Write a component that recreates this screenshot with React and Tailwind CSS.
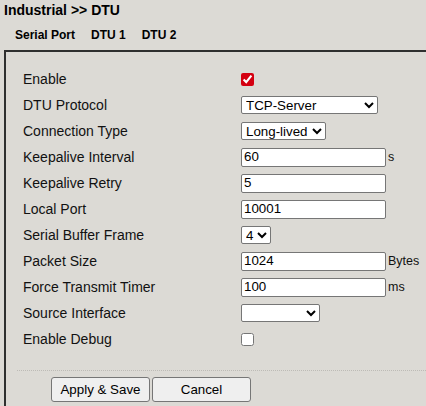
import { useState } from "react";

const font = { fontFamily: '"Liberation Sans", Arial, sans-serif' };

function Row({ label, children }) {
  return (
    <div className="flex h-[26px] items-center">
      <div className="w-[218px] text-[14px] text-[#111]">{label}</div>
      <div className="flex items-center">{children}</div>
    </div>
  );
}

const inputCls =
  "h-[19px] w-[145px] rounded-[2px] border border-[#767676] bg-white px-[2px] text-[13.33px] text-black outline-none";
const selectCls =
  "h-[18px] rounded-[2px] border border-[#767676] bg-white text-[13.33px] text-black";

export default function App() {
  const [enable, setEnable] = useState(true);
  const [debug, setDebug] = useState(false);

  return (
    <div className="h-[406px] w-[426px] overflow-hidden bg-[#dcdad5]" style={font}>
      {/* Title */}
      <div className="px-[4px] text-[14px] font-bold leading-[20px] text-black">
        Industrial &gt;&gt; DTU
      </div>

      {/* Tabs */}
      <div className="mt-[7px] flex gap-[16px] pl-[15px] text-[12px] font-bold leading-[17px] text-black">
        <span>Serial Port</span>
        <span>DTU 1</span>
        <span>DTU 2</span>
      </div>

      {/* Panel */}
      <div className="ml-[4px] mt-[6px] w-[450px] border-l-2 border-t-2 border-[#2f2f2f] pb-6 pl-[17px] pt-[14px]">
        <Row label="Enable">
          <input
            type="checkbox"
            checked={enable}
            onChange={(e) => setEnable(e.target.checked)}
            className="m-0 h-[13px] w-[13px] accent-[#d40010]"
          />
        </Row>
        <Row label="DTU Protocol">
          <select className={selectCls + " w-[137px]"} defaultValue="TCP-Server">
            <option>TCP-Server</option>
            <option>TCP-Client</option>
            <option>UDP</option>
          </select>
        </Row>
        <Row label="Connection Type">
          <select className={selectCls + " w-[85px]"} defaultValue="Long-lived">
            <option>Long-lived</option>
            <option>Short-lived</option>
          </select>
        </Row>
        <Row label="Keepalive Interval">
          <input className={inputCls} defaultValue="60" />
          <span className="ml-[2px] text-[12.5px] text-[#111]">s</span>
        </Row>
        <Row label="Keepalive Retry">
          <input className={inputCls} defaultValue="5" />
        </Row>
        <Row label="Local Port">
          <input className={inputCls} defaultValue="10001" />
        </Row>
        <Row label="Serial Buffer Frame">
          <select className={selectCls + " w-[30px]"} defaultValue="4">
            <option>1</option>
            <option>2</option>
            <option>3</option>
            <option>4</option>
          </select>
        </Row>
        <Row label="Packet Size">
          <input className={inputCls} defaultValue="1024" />
          <span className="ml-[2px] text-[12.5px] text-[#111]">Bytes</span>
        </Row>
        <Row label="Force Transmit Timer">
          <input className={inputCls} defaultValue="100" />
          <span className="ml-[2px] text-[12.5px] text-[#111]">ms</span>
        </Row>
        <Row label="Source Interface">
          <select className={selectCls + " w-[79px]"} defaultValue="">
            <option value=""></option>
          </select>
        </Row>
        <Row label="Enable Debug">
          <input
            type="checkbox"
            checked={debug}
            onChange={(e) => setDebug(e.target.checked)}
            className="m-0 h-[13px] w-[13px]"
          />
        </Row>

        <div className="-ml-[6px] mt-[18px] border-t border-dotted border-[#bdbbb6]" />

        <div className="ml-[28px] mt-[6px] flex gap-[2px]">
          <button className="h-[25px] w-[99px] rounded-[3px] border border-[#767676] bg-[#efefef] text-[13.33px] text-black">
            Apply &amp; Save
          </button>
          <button className="h-[25px] w-[99px] rounded-[3px] border border-[#767676] bg-[#efefef] text-[13.33px] text-black">
            Cancel
          </button>
        </div>
      </div>
    </div>
  );
}
